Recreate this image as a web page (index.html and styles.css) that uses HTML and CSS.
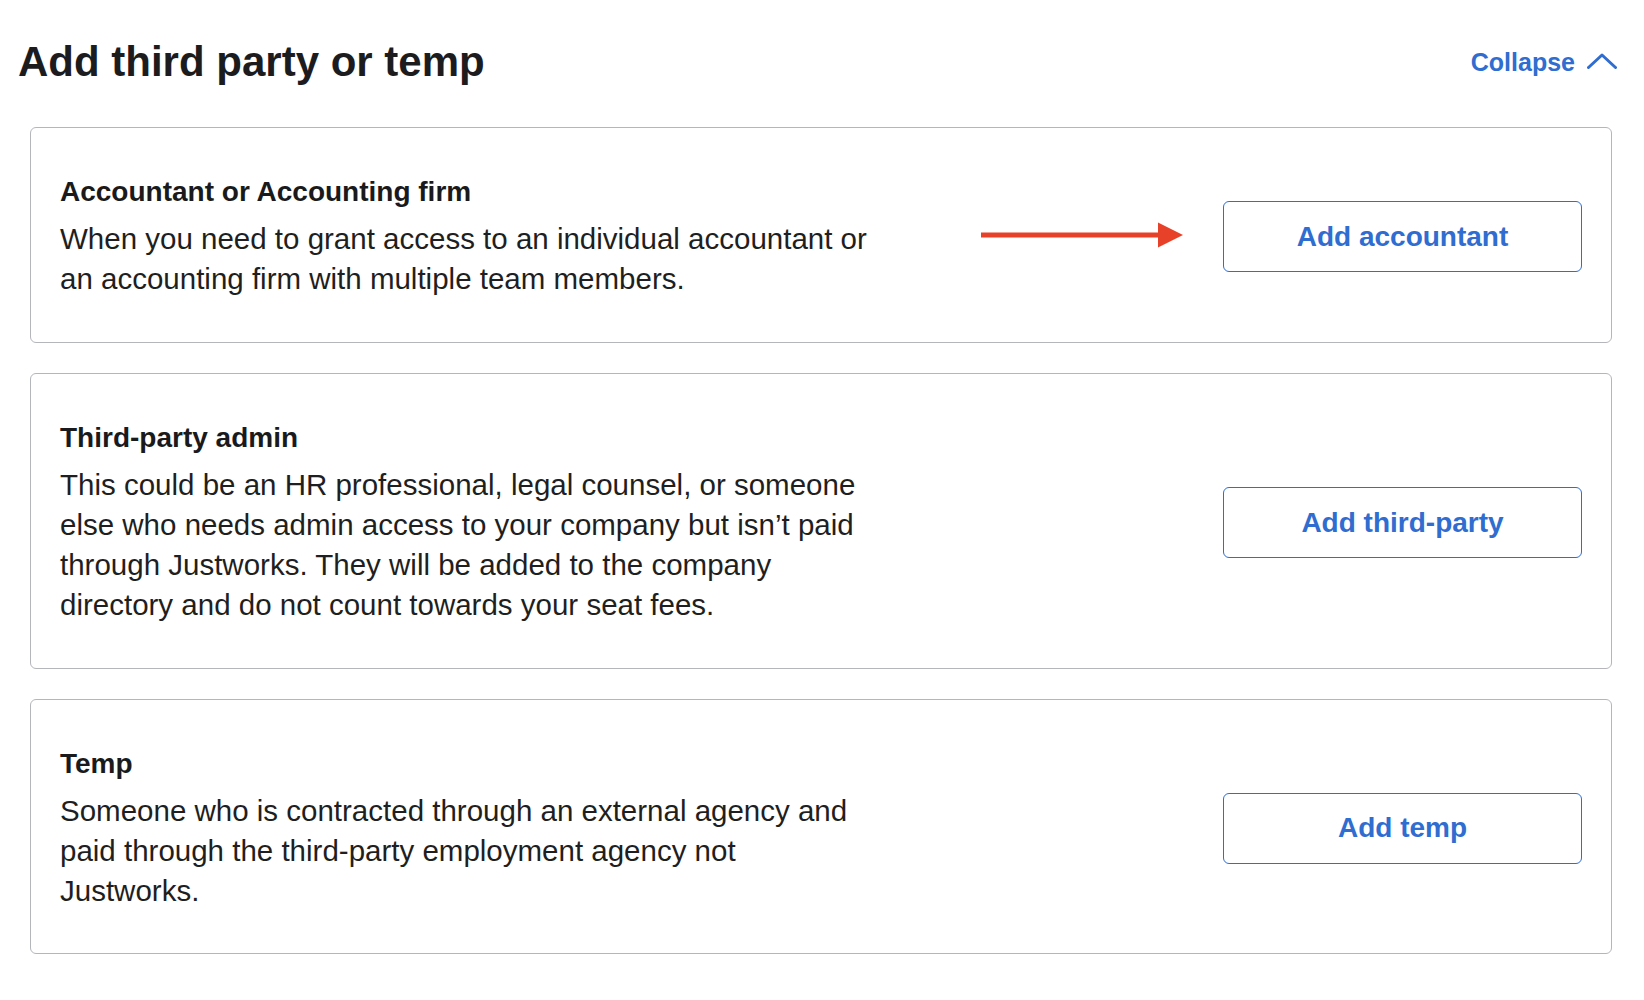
FILE: index.html
```html
<!DOCTYPE html>
<html lang="en">
<head>
<meta charset="utf-8">
<title>Add third party or temp</title>
<link rel="stylesheet" href="styles.css">
</head>
<body>
<div class="page">
  <header class="header">
    <h1 class="title">Add third party or temp</h1>
    <a class="collapse" href="#">
      <span>Collapse</span>
      <svg class="chevron" width="30" height="16" viewBox="0 0 30 16" aria-hidden="true">
        <polyline points="1.5,14.5 15,2 28.5,14.5" fill="none" stroke="currentColor" stroke-width="3" stroke-linecap="round" stroke-linejoin="round"/>
      </svg>
    </a>
  </header>

  <section class="cards">
    <div class="card">
      <div class="card-text">
        <h2 class="card-title">Accountant or Accounting firm</h2>
        <p class="card-desc">When you need to grant access to an individual accountant or an accounting firm with multiple team members.</p>
      </div>
      <svg class="arrow" width="202" height="26" viewBox="0 0 202 26" aria-hidden="true">
        <rect x="0" y="10.5" width="180" height="5" fill="#e8412a"/>
        <polygon points="177,0.5 202,13 177,25.5" fill="#e8412a"/>
      </svg>
      <button class="btn" type="button">Add accountant</button>
    </div>

    <div class="card">
      <div class="card-text">
        <h2 class="card-title">Third-party admin</h2>
        <p class="card-desc">This could be an HR professional, legal counsel, or someone else who needs admin access to your company but isn’t paid through Justworks. They will be added to the company directory and do not count towards your seat fees.</p>
      </div>
      <button class="btn" type="button">Add third-party</button>
    </div>

    <div class="card">
      <div class="card-text">
        <h2 class="card-title">Temp</h2>
        <p class="card-desc">Someone who is contracted through an external agency and paid through the third-party employment agency not Justworks.</p>
      </div>
      <button class="btn" type="button">Add temp</button>
    </div>
  </section>
</div>
</body>
</html>
```

FILE: styles.css
```css
html, body {
  margin: 0;
  padding: 0;
  background: #ffffff;
}

body {
  font-family: "Liberation Sans", Arial, sans-serif;
  color: #1d1d1f;
}

.page {
  padding-top: 37px;
}

.header {
  display: flex;
  align-items: center;
  justify-content: space-between;
  padding: 0 27px 0 18px;
}

.title {
  margin: 0;
  font-size: 42px;
  line-height: 50px;
  font-weight: 700;
  color: #1c1c1e;
}

.collapse {
  display: flex;
  align-items: center;
  gap: 12px;
  color: #2f6dd0;
  font-size: 25px;
  font-weight: 700;
  text-decoration: none;
}

.chevron {
  display: block;
  margin-top: -2px;
}

.cards {
  display: flex;
  flex-direction: column;
  gap: 30px;
  margin: 40px 32px 0 30px;
}

.card {
  position: relative;
  display: flex;
  align-items: center;
  justify-content: space-between;
  border: 1px solid #b4b6bb;
  border-radius: 6px;
  padding: 46px 29px 42px 29px;
}

.card-text {
  width: 820px;
}

.card-title {
  margin: 0 0 9px;
  font-size: 28px;
  line-height: 36px;
  font-weight: 700;
  color: #1a1a1c;
}

.card-desc {
  margin: 0;
  font-size: 29.5px;
  line-height: 40.25px;
  color: #1f1f21;
}

.arrow {
  position: absolute;
  right: 428px;
  top: 94px;
  display: block;
}

.btn {
  flex: none;
  box-sizing: border-box;
  width: 359px;
  height: 71px;
  border: 1px solid #2f6dd0;
  border-radius: 6px;
  background: #ffffff;
  color: #2f6dd0;
  font-family: "Liberation Sans", Arial, sans-serif;
  font-size: 28px;
  font-weight: 700;
  cursor: pointer;
}
```
